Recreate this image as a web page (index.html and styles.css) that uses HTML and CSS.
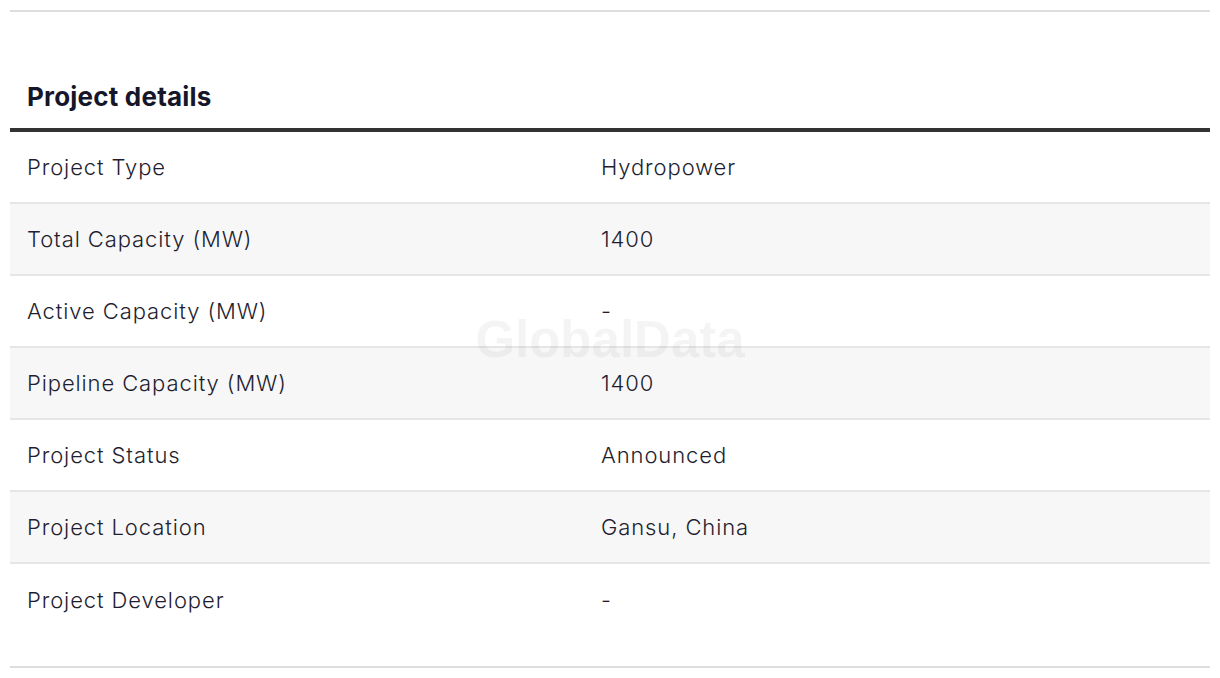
FILE: index.html
```html
<!DOCTYPE html>
<html lang="en">
<head>
<meta charset="utf-8">
<title>Project details</title>
<link rel="stylesheet" href="styles.css">
</head>
<body>
<div class="page">
  <hr class="rule-top">
  <section class="details">
    <h2 class="details-title">Project details</h2>
    <div class="table">
      <div class="row"><div class="cell key">Project Type</div><div class="cell val">Hydropower</div></div>
      <div class="row alt"><div class="cell key">Total Capacity (MW)</div><div class="cell val">1400</div></div>
      <div class="row"><div class="cell key">Active Capacity (MW)</div><div class="cell val">-</div></div>
      <div class="row alt"><div class="cell key">Pipeline Capacity (MW)</div><div class="cell val">1400</div></div>
      <div class="row"><div class="cell key">Project Status</div><div class="cell val">Announced</div></div>
      <div class="row alt"><div class="cell key">Project Location</div><div class="cell val">Gansu, China</div></div>
      <div class="row last"><div class="cell key">Project Developer</div><div class="cell val">-</div></div>
      <div class="watermark">GlobalData</div>
    </div>
  </section>
  <hr class="rule-bottom">
</div>
</body>
</html>
```

FILE: styles.css
```css
html, body {
  margin: 0;
  padding: 0;
  background: #ffffff;
}
body {
  font-family: Inter, "Liberation Sans", sans-serif;
  color: #1e1e30;
}
.page {
  padding: 10px 10px 0 10px;
}
hr {
  margin: 0;
  border: 0;
}
.rule-top {
  height: 2px;
  background: #dddddd;
}
.details-title {
  margin: 0;
  padding: 70px 17px 16px 17px;
  font-size: 26px;
  line-height: 30px;
  font-weight: 700;
  letter-spacing: 0.2px;
  color: #16162a;
}
.table {
  position: relative;
  border-top: 4px solid #333333;
}
.row {
  display: grid;
  grid-template-columns: 574px 1fr;
  height: 70px;
  align-items: center;
  padding: 0 17px;
  border-bottom: 2px solid #e6e6e6;
  font-size: 22px;
  font-weight: 300;
  letter-spacing: 0.9px;
}
.row.alt {
  background: #f7f7f7;
}
.row.last {
  border-bottom: 0;
  height: 72px;
  margin-bottom: 30px;
}
.cell {
  white-space: nowrap;
}
.watermark {
  position: absolute;
  left: 0;
  right: 0;
  top: 180px;
  text-align: center;
  font-size: 51px;
  line-height: 56px;
  font-weight: 700;
  color: rgba(0, 0, 0, 0.045);
  pointer-events: none;
  font-family: "Liberation Sans", sans-serif;
}
.rule-bottom {
  height: 2px;
  background: #dddddd;
}
```
